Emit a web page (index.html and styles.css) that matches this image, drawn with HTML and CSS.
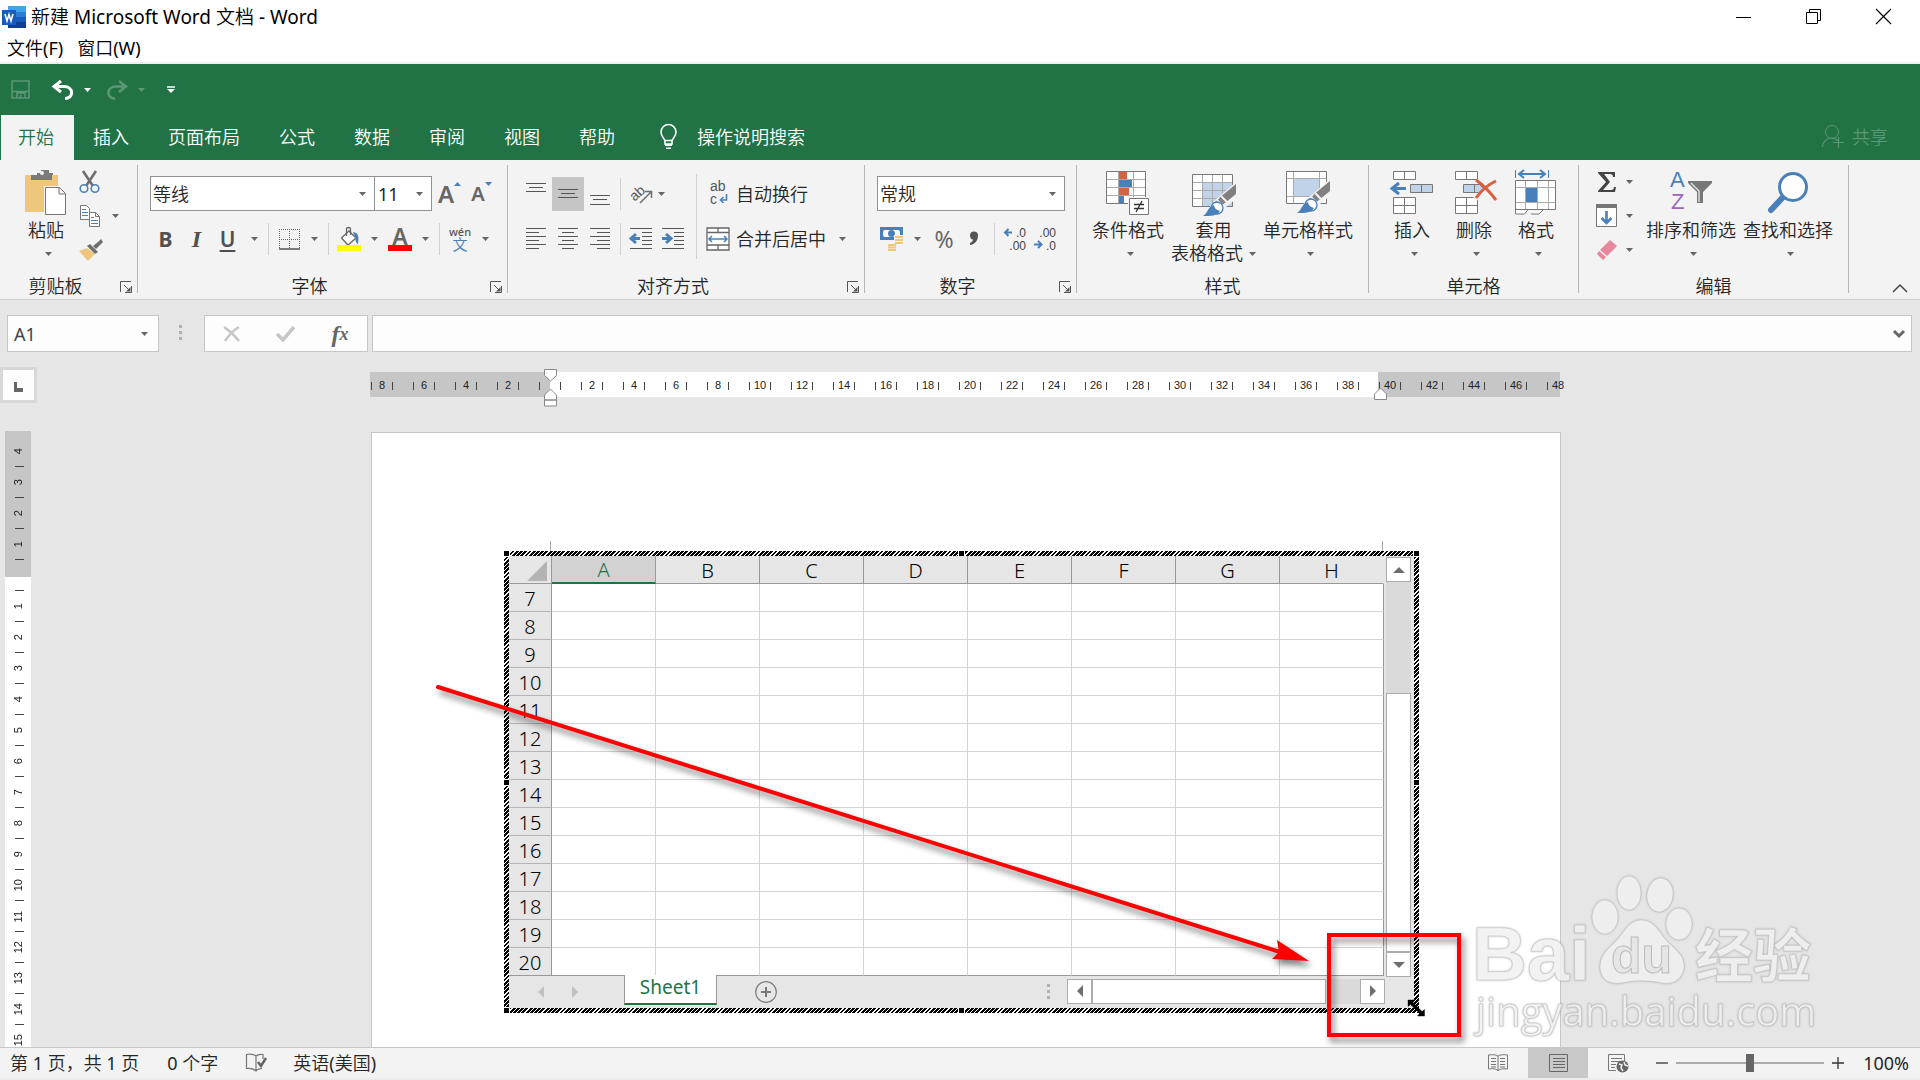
FILE: index.html
```html
<!DOCTYPE html>
<html lang="zh-CN">
<head>
<meta charset="utf-8">
<title>新建 Microsoft Word 文档 - Word</title>
<link rel="stylesheet" href="styles.css">
</head>
<body>
<svg class="defs" width="0" height="0" aria-hidden="true">
  <defs>
    <symbol id="caret" viewBox="0 0 7 4"><path d="M0 0h7L3.500 4z" fill="currentColor"/></symbol>
    <symbol id="launch" viewBox="0 0 12 12"><path d="M.5 11V.5H11M11.500 5v6.500H5M4 4l6 6" fill="none" stroke="#555"/><path d="M10.500 6v4.500H6z" fill="#555"/></symbol>
    <symbol id="brush" viewBox="0 0 34 34"><path d="M33 1v10L22 20l-6-5z" fill="#808080"/><path d="M22 20l-5 4-5-5 5-4z" fill="#808080"/><path d="M18 13l7 7M14 17l7 7" stroke="#f3f3f3" stroke-width="2"/><circle cx="14" cy="25" r="6" fill="#fff" stroke="#4a80ba" stroke-width="1.300"/><path d="M0 33c5-3 5-10 11-11 0 3 2 5 6 6-3 5-9 5-17 5z" fill="#4a80ba"/></symbol>
  </defs>
</svg>

<header class="titlebar">
  <svg class="applogo" viewBox="0 0 24 22"><path d="M6 0h18v6H6z" fill="#41a5ee"/><path d="M6 6h18v5H6z" fill="#2b7cd3"/><path d="M6 11h18v5H6z" fill="#185abd"/><path d="M6 16h18v6H6z" fill="#103f91"/><rect y="4" width="14" height="15" fill="#185abd"/><path d="M3 8l2 7 2-6.500L9 15l2-7" fill="none" stroke="#fff" stroke-width="1.600"/></svg>
  <h1>新建 Microsoft Word 文档 - Word</h1>
  <div class="winbtns">
    <button aria-label="最小化"><svg width="16" height="16"><path d="M0 8.500h15" stroke="#000"/></svg></button>
    <button aria-label="还原"><svg width="16" height="16"><path d="M.5 3.500h11v11H.5zM3.500 3.500v-3h11v11h-3" fill="none" stroke="#000"/></svg></button>
    <button aria-label="关闭"><svg width="16" height="16"><path d="M0 0l15 15M15 0L0 15" stroke="#000" stroke-width="1.200"/></svg></button>
  </div>
</header>
<nav class="menubar"><a href="#file">文件(F)</a><a href="#window">窗口(W)</a></nav>

<section class="greenbar">
  <div class="qat">
    <button class="q-save dim" aria-label="保存"><svg width="19" height="19"><path d="M1 1h17v17H1zM1 11.500h17M6 18v-5h8v5M9.500 15v3" fill="none" stroke="currentColor" stroke-width="1.600"/></svg></button>
    <button class="q-undo" aria-label="撤消"><svg width="22" height="20"><path d="M9 1L2 6.500 9 12M3 6.500h9c10 0 10 12 1 12" fill="none" stroke="#fff" stroke-width="3"/></svg><svg class="caret"><use href="#caret"/></svg></button>
    <button class="q-redo dim" aria-label="恢复"><svg width="22" height="20"><path d="M13 1l7 5.500-7 5.500M19 6.500h-9c-10 0-10 12-1 12" fill="none" stroke="currentColor" stroke-width="2.500"/></svg><svg class="caret"><use href="#caret"/></svg></button>
    <button class="q-more" aria-label="自定义快速访问工具栏"><svg width="8" height="8"><path d="M0 1h8" stroke="#fff" stroke-width="1.500"/><path d="M0 3h8L4 7z" fill="#fff"/></svg></button>
  </div>
  <div class="tabs">
    <button class="active">开始</button><button>插入</button><button>页面布局</button><button>公式</button><button>数据</button><button>审阅</button><button>视图</button><button>帮助</button>
    <button class="tell"><svg width="18" height="26"><path d="M5 20v-3c0-2-4-4-4-9a7.500 7.500 0 0 1 15 0c0 5-4 7-4 9v3zM5 16.500h7" fill="none" stroke="#fff" stroke-width="1.600"/><path d="M5 20h7v2H5zM6 23.500h5V25H6z" fill="#fff"/></svg>操作说明搜索</button>
    <button class="share dim"><svg width="22" height="23"><circle cx="10" cy="7" r="6.500" fill="none" stroke="currentColor"/><path d="M.5 22c0-5 4-9 9-9 3 0 5 1 6 3M16.500 12v11M11 17.500h11" fill="none" stroke="currentColor" stroke-width="1.200"/></svg>共享</button>
  </div>
</section>

<section class="ribbon">
  <div class="group g-clip">
    <div class="body">
      <button class="big"><svg viewBox="0 0 42 46"><rect y="6" width="33" height="37" rx="1" fill="#eec77d"/><path d="M6 6h6V4h4V1h8v3h4v2h-1v5H6z" fill="#7a7a7a"/><circle cx="17" cy="4" r="2" fill="#f3f3f3"/><path d="M19 17h17l6 6v23H19z" fill="#f3f3f3"/><path d="M20.500 18.500h14l6 6v21h-20zM34 18.500v6.500h6.500" fill="#fff" stroke="#777"/></svg><span>粘贴</span><svg class="caret"><use href="#caret"/></svg></button>
      <div class="stack">
        <button aria-label="剪切"><svg width="22" height="22"><path d="M4 0l10 15M17 0L7 15" stroke="#6e6e6e" stroke-width="2.600"/><circle cx="5" cy="17.500" r="3.800" fill="#f3f3f3" stroke="#4a80ba" stroke-width="1.600"/><circle cx="16" cy="17.500" r="3.800" fill="#f3f3f3" stroke="#4a80ba" stroke-width="1.600"/></svg></button>
        <button aria-label="复制"><svg width="22" height="22"><path d="M1.500.5h6l3 3v11h-9zM10.500 7.500h6l4 4v10h-10z" fill="#fff" stroke="#777"/><path d="M3 4.500h4M3 7.500h6M3 10.500h6M12 12.500h3M12 15.500h7M12 18.500h7" stroke="#4a80ba"/><path d="M16.500 7.500v4h4" fill="none" stroke="#777"/></svg><svg class="caret"><use href="#caret"/></svg></button>
        <button aria-label="格式刷"><svg width="24" height="22"><path d="M0 12l8-3 8 6-7 7z" fill="#eec77d"/><path d="M8 7l3-2 8 8-3 2z" fill="#6e6e6e"/><path d="M14 7l5-4 3-3 2 3-3 3-4 4z" fill="#6e6e6e"/></svg></button>
      </div>
    </div>
    <div class="label">剪贴板<button aria-label="剪贴板选项"><svg width="12" height="12"><use href="#launch"/></svg></button></div>
  </div>

  <div class="group g-font">
    <div class="body rows">
      <div class="row">
        <label class="combo c-font"><select aria-label="字体"><option>等线</option></select><svg class="caret"><use href="#caret"/></svg></label>
        <label class="combo c-size"><select aria-label="字号"><option>11</option></select><svg class="caret"><use href="#caret"/></svg></label>
        <button class="grow-a" aria-label="增大字号">A<svg width="7" height="4"><path d="M0 4h7L3.500 0z" fill="#4a80ba"/></svg></button>
        <button class="shrink-a" aria-label="减小字号">A<svg width="7" height="4"><path d="M0 0h7L3.500 4z" fill="#4a80ba"/></svg></button>
      </div>
      <div class="row">
        <button class="ch b" aria-label="加粗">B</button><button class="ch i" aria-label="倾斜">I</button><button class="ch u" aria-label="下划线">U</button>
        <button class="drop" aria-label="下划线选项"><svg class="caret"><use href="#caret"/></svg></button><i class="sep"></i>
        <button class="ic" aria-label="边框"><svg width="21" height="21"><path d="M.5 0v20M0 .5h21M20.500 0v20M10.500 0v20M0 10.500h21" stroke="#666" stroke-dasharray="1 1"/><path d="M0 20h21" stroke="#555" stroke-width="1.500"/></svg></button>
        <button class="drop" aria-label="边框选项"><svg class="caret"><use href="#caret"/></svg></button><i class="sep"></i>
        <button class="ic" aria-label="填充颜色"><svg width="24" height="24"><path d="M4.500 11L12 4l7 7-8 7z" fill="#fff" stroke="#666" stroke-width="1.300"/><path d="M9.500 9V2c0-2 4-2 4 0v6" fill="none" stroke="#666" stroke-width="1.300"/><path d="M16 5c6 1 6 5 5 12-3-1-2-6-5-12z" fill="#4a80ba"/><path d="M0 18h24v6H0z" fill="#ff0"/></svg></button>
        <button class="drop" aria-label="填充颜色选项"><svg class="caret"><use href="#caret"/></svg></button>
        <button class="ic fontcolor" aria-label="字体颜色">A</button>
        <button class="drop" aria-label="字体颜色选项"><svg class="caret"><use href="#caret"/></svg></button><i class="sep"></i>
        <button class="ic pinyin" aria-label="拼音"><span>wén</span><b>文</b></button>
        <button class="drop" aria-label="拼音选项"><svg class="caret"><use href="#caret"/></svg></button>
      </div>
    </div>
    <div class="label">字体<button aria-label="字体选项"><svg width="12" height="12"><use href="#launch"/></svg></button></div>
  </div>

  <div class="group g-align">
    <div class="body cols">
      <div class="rows">
        <div class="row">
          <button class="al" aria-label="顶端对齐"><svg width="20" height="32"><path d="M0 5.500h20M3 9.500h14M0 13.500h20" stroke="#555"/></svg></button>
          <button class="al on" aria-label="垂直居中"><svg width="20" height="32"><path d="M0 11.500h20M3 15.500h14M0 19.500h20" stroke="#555"/></svg></button>
          <button class="al" aria-label="底端对齐"><svg width="20" height="32"><path d="M0 17.500h20M3 21.500h14M0 26.500h20" stroke="#555"/></svg></button>
          <i class="sep"></i>
          <button class="al orient" aria-label="方向"><svg width="24" height="22"><text x="0" y="14" transform="rotate(-42 8 12)" class="abt">ab</text><path d="M9 20L20 9M14 8.500h6.500V15" fill="none" stroke="#6e6e6e" stroke-width="1.500"/></svg><svg class="caret"><use href="#caret"/></svg></button>
        </div>
        <div class="row">
          <button class="al" aria-label="左对齐"><svg width="20" height="22"><path d="M0 .5h20M0 4.500h13M0 8.500h20M0 12.500h13M0 16.500h20M0 20.500h13" stroke="#555"/></svg></button>
          <button class="al" aria-label="居中"><svg width="20" height="22"><path d="M0 .5h20M4 4.500h12M0 8.500h20M4 12.500h12M0 16.500h20M4 20.500h12" stroke="#555"/></svg></button>
          <button class="al" aria-label="右对齐"><svg width="20" height="22"><path d="M0 .5h20M7 4.500h13M0 8.500h20M7 12.500h13M0 16.500h20M7 20.500h13" stroke="#555"/></svg></button>
          <i class="sep"></i>
          <button class="al" aria-label="减少缩进"><svg width="22" height="22"><path d="M0 .5h22M12 4.500h10M12 8.500h10M12 12.500h10M12 16.500h10M0 20.500h22" stroke="#555"/><path d="M10 10.500H2M6 6l-5 4.500L6 15" fill="none" stroke="#4a80ba" stroke-width="3"/></svg></button>
          <button class="al" aria-label="增加缩进"><svg width="22" height="22"><path d="M0 .5h22M12 4.500h10M12 8.500h10M12 12.500h10M12 16.500h10M0 20.500h22" stroke="#555"/><path d="M0 10.500h8M4 6l5 4.500L4 15" fill="none" stroke="#4a80ba" stroke-width="3"/></svg></button>
        </div>
      </div>
      <i class="sep tall"></i>
      <div class="rows">
        <div class="row"><button class="txt"><svg width="24" height="24"><text x="4" y="9" class="abt">ab</text><text x="4" y="22" class="abt">c</text><path d="M20.500 12v6H15M17.500 15l-3 3 3 3" fill="none" stroke="#4a80ba" stroke-width="1.600"/></svg><span>自动换行</span></button></div>
        <div class="row"><button class="txt"><svg width="24" height="24"><path d="M1 1h22v22H1zM1 5.500h22M1 18h22M12 1v4.500M12 18v5" fill="#fff" stroke="#666" stroke-width="1.300"/><path d="M3 12h18M6 9l-3 3 3 3M18 9l3 3-3 3" fill="none" stroke="#4a80ba" stroke-width="1.500"/></svg><span>合并后居中</span></button><button class="drop wide" aria-label="合并选项"><svg class="caret"><use href="#caret"/></svg></button></div>
      </div>
    </div>
    <div class="label">对齐方式<button aria-label="对齐选项"><svg width="12" height="12"><use href="#launch"/></svg></button></div>
  </div>

  <div class="group g-num">
    <div class="body rows">
      <div class="row"><label class="combo c-num"><select aria-label="数字格式"><option>常规</option></select><svg class="caret"><use href="#caret"/></svg></label></div>
      <div class="row">
        <button class="ic" aria-label="会计数字格式"><svg width="24" height="24"><path d="M0 0h23v13H0z" fill="#4a80ba"/><path d="M4 3h15l1 2v3l-1 2H4L3 8V5z" fill="#fff"/><circle cx="11.500" cy="6.500" r="3.500" fill="#4a80ba"/><path d="M14 8h9v10h-9zM7 16h10v8H7z" fill="#f3f3f3"/><path d="M15 10h8M15 13h8M15 16h8M8 18h8M8 20.500h8M8 23h8" stroke="#eec77d" stroke-width="2"/></svg></button>
        <button class="drop" aria-label="会计选项"><svg class="caret"><use href="#caret"/></svg></button>
        <button class="ic pct" aria-label="百分比">%</button>
        <button class="ic" aria-label="千位分隔"><svg width="10" height="16"><path d="M1 4.500a4 4 0 0 1 8 0c0 5-3 9-8 9.500v-2c2-1 3-2 3-3.500-2 0-3-2-3-4z" fill="#555"/></svg></button>
        <i class="sep"></i>
        <button class="ic dec" aria-label="增加小数位"><svg width="24" height="26"><text x="23" y="11" text-anchor="end">.0</text><text x="23" y="24" text-anchor="end">.00</text><path d="M9 6.500H2M5.500 3L2 6.500 5.500 10" fill="none" stroke="#4a80ba" stroke-width="2"/></svg></button>
        <button class="ic dec" aria-label="减少小数位"><svg width="24" height="26"><text x="23" y="11" text-anchor="end">.00</text><text x="23" y="24" text-anchor="end">.0</text><path d="M1 18.500h7M5 15l3.500 3.500L5 22" fill="none" stroke="#4a80ba" stroke-width="2"/></svg></button>
      </div>
    </div>
    <div class="label">数字<button aria-label="数字选项"><svg width="12" height="12"><use href="#launch"/></svg></button></div>
  </div>

  <div class="group g-style">
    <div class="body">
      <button class="big"><svg viewBox="0 0 44 46"><path d="M.5 2.500h39v32H.5z" fill="#fff" stroke="#777"/><path d="M1 10.500h38M1 18.500h38M1 26.500h38M12.500 3v31M27.500 3v31" stroke="#aaa"/><path d="M13 3h8v7h-8zM13 19h10v7H13z" fill="#d95f41"/><path d="M13 11h13v7H13zM13 27h5v7h-5z" fill="#4a80ba"/><path d="M22 28h22v18H22z" fill="#f3f3f3"/><path d="M23.500 29.500h19v16h-19z" fill="#fff" stroke="#777"/><path d="M28 35.500h10M28 39.500h10M36 32l-6 11" stroke="#333" stroke-width="1.300"/></svg><span>条件格式</span><svg class="caret"><use href="#caret"/></svg></button>
      <button class="big"><svg viewBox="0 0 44 46"><path d="M.5 5.500h40v32H.5z" fill="#fff" stroke="#777"/><path d="M11 14h29v23H11z" fill="#c0d3e9"/><path d="M1 13.500h39M1 21.500h39M1 29.500h39M10.500 6v31M20.500 6v31M30.500 6v31" stroke="#aaa"/><path d="M44 13L22 32l-10 14h12L44 30z" fill="#f3f3f3"/><use href="#brush" x="11" y="14" width="34" height="34"/></svg><span>套用</span><span class="inl">表格格式<svg class="caret"><use href="#caret"/></svg></span></button>
      <button class="big"><svg viewBox="0 0 44 46"><path d="M.5 2.500h40v32H.5z" fill="#fff" stroke="#777"/><path d="M8 10h25v17H8z" fill="#c0d3e9"/><path d="M1 9.500h39M1 27.500h39M7.500 3v31M33.500 3v31" stroke="#aaa"/><path d="M44 10L22 29 12 43h12L44 27z" fill="#f3f3f3"/><use href="#brush" x="11" y="11" width="34" height="34"/></svg><span>单元格样式</span><svg class="caret"><use href="#caret"/></svg></button>
    </div>
    <div class="label">样式</div>
  </div>

  <div class="group g-cells">
    <div class="body">
      <button class="big"><svg viewBox="0 0 44 46"><path d="M3.500 2.500h22v8h-22zM14.500 2.500v8M3.500 28.500h22v16h-22zM14.500 28.500v16M3.500 36.500h22" fill="#fff" stroke="#777"/><path d="M20.500 15.500h22v8h-22zM31.500 15.500v8" fill="#c0d3e9" stroke="#777"/><path d="M16 19.500H3M9 14l-7 5.500L9 25" fill="none" stroke="#4a80ba" stroke-width="3"/></svg><span>插入</span><svg class="caret"><use href="#caret"/></svg></button>
      <button class="big"><svg viewBox="0 0 44 46"><path d="M3.500 2.500h22v8h-22zM14.500 2.500v8M3.500 28.500h22v16h-22zM14.500 28.500v16M3.500 36.500h22" fill="#fff" stroke="#777"/><path d="M11.500 15.500h16l4 4-4 4h-16zM22.500 15.500v8" fill="#c0d3e9" stroke="#777"/><path d="M23 30L45 10" stroke="#f3f3f3" stroke-width="5"/><path d="M24 11c7 5 14 12 20 20M24 29c5-7 11-13 20-17" fill="none" stroke="#d95f41" stroke-width="3"/></svg><span>删除</span><svg class="caret"><use href="#caret"/></svg></button>
      <button class="big"><svg viewBox="0 0 44 46"><path d="M1.500 11.500h40v29h-40zM1.500 40v5h9l4-5M17 45h8l5-5" fill="#fff" stroke="#777"/><path d="M11.500 12v28M23.500 12v28M34.500 12v28M2 18.500h39M2 33.500h39" stroke="#aaa"/><path d="M12 19h11v14H12z" fill="#4a80ba"/><path d="M1.500 1v8M34.500 1v8" stroke="#4a80ba"/><path d="M6 5h24M10 1L5 5l5 4M26 1l5 4-5 4" fill="none" stroke="#4a80ba" stroke-width="2"/></svg><span>格式</span><svg class="caret"><use href="#caret"/></svg></button>
    </div>
    <div class="label">单元格</div>
  </div>

  <div class="group g-edit">
    <div class="body">
      <div class="stack">
        <button aria-label="自动求和"><svg width="22" height="22"><path d="M2 1h17v5h-2c0-2-1-3-3-3H8l6 8-7 8h8c2 0 3-1 3-3h2l-1 5H2v-1l8-9-8-9z" fill="#444"/></svg><svg class="caret"><use href="#caret"/></svg></button>
        <button aria-label="填充"><svg width="22" height="24"><path d="M.5 1.500h20v21H.5z" fill="#fff" stroke="#777"/><path d="M0 0h21v4H0z" fill="#777"/><path d="M10.500 7v11M5.500 14l5 5 5-5" fill="none" stroke="#4a80ba" stroke-width="2.600"/></svg><svg class="caret"><use href="#caret"/></svg></button>
        <button aria-label="清除"><svg width="22" height="22"><path d="M14 1l7 6-10 10-7-6zM3 12l7 6-3 3-6-6z" fill="#e8879b"/></svg><svg class="caret"><use href="#caret"/></svg></button>
      </div>
      <button class="big"><svg viewBox="0 0 44 46"><text x="1" y="18" class="az a">A</text><text x="2" y="40" class="az z">Z</text><path d="M19 12h24v2l-9 9v11h-6V23l-9-9z" fill="#777"/><path d="M22 14l8 8v11" fill="none" stroke="#ddd" stroke-width="1.500"/></svg><span>排序和筛选</span><svg class="caret"><use href="#caret"/></svg></button>
      <button class="big"><svg viewBox="0 0 44 46"><path d="M5 41L19 26" stroke="#4a80ba" stroke-width="6" stroke-linecap="round"/><circle cx="27" cy="18" r="13.500" fill="#fff" stroke="#4a80ba" stroke-width="3"/></svg><span>查找和选择</span><svg class="caret"><use href="#caret"/></svg></button>
    </div>
    <div class="label">编辑</div>
  </div>
  <button class="collapse" aria-label="折叠功能区"><svg width="16" height="10"><path d="M1 9l7-7 7 7" fill="none" stroke="#444" stroke-width="1.500"/></svg></button>
</section>

<section class="formulabar">
  <label class="namebox"><input aria-label="名称框" value="A1"><svg class="caret"><use href="#caret"/></svg></label>
  <svg class="dots" width="3" height="16"><path d="M0 0h3v3H0zM0 6h3v3H0zM0 12h3v3H0z" fill="#b0b0b0"/></svg>
  <div class="fxbox">
    <button aria-label="取消"><svg width="18" height="16"><path d="M1 1c6 4 11 9 15 14M16 1C11 4 6 9 2 15" fill="none" stroke="#c6c6c6" stroke-width="2.500"/></svg></button>
    <button aria-label="输入"><svg width="20" height="16"><path d="M1 8l6 6L18 1" fill="none" stroke="#c6c6c6" stroke-width="3.500"/></svg></button>
    <button class="fx" aria-label="插入函数">f<small>x</small></button>
  </div>
  <label class="formula"><input aria-label="编辑栏" value=""><svg width="12" height="8"><path d="M1 1l5 5 5-5" fill="none" stroke="#666" stroke-width="3"/></svg></label>
</section>

<main class="workspace">
  <div class="leftrail">
    <button class="tabsel" aria-label="制表符"><svg width="10" height="10"><path d="M0 0h3v6h6v4H0z" fill="#666"/></svg></button>
    <ol class="vruler"><li><span>4</span></li><li><span>3</span></li><li><span>2</span></li><li><span>1</span></li><li></li><li><span>1</span></li><li><span>2</span></li><li><span>3</span></li><li><span>4</span></li><li><span>5</span></li><li><span>6</span></li><li><span>7</span></li><li><span>8</span></li><li><span>9</span></li><li><span>10</span></li><li><span>11</span></li><li><span>12</span></li><li><span>13</span></li><li><span>14</span></li><li><span>15</span></li></ol>
  </div>
  <div class="canvas">
    <div class="hruler">
      <ol><li>8</li><li>6</li><li>4</li><li>2</li><li></li><li>2</li><li>4</li><li>6</li><li>8</li><li>10</li><li>12</li><li>14</li><li>16</li><li>18</li><li>20</li><li>22</li><li>24</li><li>26</li><li>28</li><li>30</li><li>32</li><li>34</li><li>36</li><li>38</li><li>40</li><li>42</li><li>44</li><li>46</li><li>48</li></ol>
      <svg class="mark first" width="13" height="38"><path d="M.5.500h12v6l-6 5.500-6-5.500zM.5 31V26l6-6 6 6v5zM.5 31h12v6H.5z" fill="#fff" stroke="#888"/></svg>
      <svg class="mark last" width="13" height="13"><path d="M.5 12.500V7l6-6 6 6v5.500z" fill="#fff" stroke="#888"/></svg>
    </div>
    <article class="page">
      <i class="crop left"></i><i class="crop right"></i>
      <div class="object">
        <i class="h tl"></i><i class="h tc"></i><i class="h tr"></i><i class="h ml"></i><i class="h mr"></i><i class="h bl"></i><i class="h bc"></i>
        <div class="sheet">
          <table>
            <thead><tr><th class="corner"><svg width="21" height="20"><path d="M20 0v20H0z" fill="#b4b4b4"/></svg></th><th class="sel">A</th><th>B</th><th>C</th><th>D</th><th>E</th><th>F</th><th>G</th><th>H</th></tr></thead>
            <tbody>
              <tr><th>7</th><td></td><td></td><td></td><td></td><td></td><td></td><td></td><td></td></tr>
              <tr><th>8</th><td></td><td></td><td></td><td></td><td></td><td></td><td></td><td></td></tr>
              <tr><th>9</th><td></td><td></td><td></td><td></td><td></td><td></td><td></td><td></td></tr>
              <tr><th>10</th><td></td><td></td><td></td><td></td><td></td><td></td><td></td><td></td></tr>
              <tr><th>11</th><td></td><td></td><td></td><td></td><td></td><td></td><td></td><td></td></tr>
              <tr><th>12</th><td></td><td></td><td></td><td></td><td></td><td></td><td></td><td></td></tr>
              <tr><th>13</th><td></td><td></td><td></td><td></td><td></td><td></td><td></td><td></td></tr>
              <tr><th>14</th><td></td><td></td><td></td><td></td><td></td><td></td><td></td><td></td></tr>
              <tr><th>15</th><td></td><td></td><td></td><td></td><td></td><td></td><td></td><td></td></tr>
              <tr><th>16</th><td></td><td></td><td></td><td></td><td></td><td></td><td></td><td></td></tr>
              <tr><th>17</th><td></td><td></td><td></td><td></td><td></td><td></td><td></td><td></td></tr>
              <tr><th>18</th><td></td><td></td><td></td><td></td><td></td><td></td><td></td><td></td></tr>
              <tr><th>19</th><td></td><td></td><td></td><td></td><td></td><td></td><td></td><td></td></tr>
              <tr><th>20</th><td></td><td></td><td></td><td></td><td></td><td></td><td></td><td></td></tr>
            </tbody>
          </table>
          <div class="vscroll">
            <button aria-label="向上"><svg width="12" height="6"><path d="M0 6h12L6 0z" fill="#6e6e6e"/></svg></button>
            <div class="track"></div><div class="thumb"></div>
            <button aria-label="向下"><svg width="12" height="6"><path d="M0 0h12L6 6z" fill="#6e6e6e"/></svg></button>
          </div>
          <div class="sheetbar">
            <button class="nav" aria-label="上一张"><svg width="6" height="12"><path d="M6 0v12L0 6z" fill="#c0c0c0"/></svg></button>
            <button class="nav" aria-label="下一张"><svg width="6" height="12"><path d="M0 0v12l6-6z" fill="#c0c0c0"/></svg></button>
            <button class="sheettab">Sheet1</button>
            <button class="add" aria-label="新工作表"><svg width="22" height="22"><circle cx="11" cy="11" r="10.300" fill="none" stroke="#808080" stroke-width="1.200"/><path d="M11 6v10M6 11h10" stroke="#777" stroke-width="2"/></svg></button>
            <svg class="dots" width="3" height="16"><path d="M0 0h3v3H0zM0 6h3v3H0zM0 12h3v3H0z" fill="#b0b0b0"/></svg>
            <div class="hscroll">
              <button aria-label="向左"><svg width="6" height="12"><path d="M6 0v12L0 6z" fill="#6e6e6e"/></svg></button>
              <div class="thumb"></div><div class="track"></div>
              <button aria-label="向右"><svg width="6" height="12"><path d="M0 0v12l6-6z" fill="#6e6e6e"/></svg></button>
            </div>
          </div>
        </div>
      </div>
      <svg class="annot" viewBox="0 0 1190 615" width="1190" height="615">
        <g class="shadow" fill="none" stroke="#f00">
          <path d="M66 254L908 519" stroke-width="4" stroke-linecap="round"/>
          <path d="M937 528L900 526l7-7-2-12z" fill="#f00" stroke="none"/>
          <rect x="957" y="502" width="130" height="100" stroke-width="4"/>
        </g>
        <path d="M1036 567h7l-2 2.500 9 9 2.500-2v6.500h-7l2-2.500-9-9-2.500 2z" fill="#000" stroke="#000" stroke-width=".4"/>
      </svg>
    </article>
  </div>
  <svg class="watermark" viewBox="0 0 370 180" width="370" height="180" aria-label="Baidu 经验 jingyan.baidu.com">
    <g class="wm">
      <text x="12" y="121" class="wm-bai">Bai</text>
      <ellipse cx="145" cy="58" rx="13" ry="17"/><ellipse cx="169" cy="34" rx="12" ry="17"/><ellipse cx="200" cy="36" rx="13" ry="17" transform="rotate(8 200 36)"/><ellipse cx="219" cy="65" rx="13" ry="16"/>
      <path d="M181 61c15 0 18 14 29 24 9 8 15 14 14 24-2 12-11 17-22 15-14-3-27-3-40 0-13 2-22-4-22-16 0-11 6-16 14-24 10-9 14-23 27-23z"/>
      <text x="151" y="114" class="wm-du">du</text>
      <text x="235" y="118" class="wm-cn">经验</text>
      <text x="16" y="167" class="wm-url">jingyan.baidu.com</text>
    </g>
  </svg>
</main>

<footer class="status">
  <span class="st-page">第 1 页，共 1 页</span><span class="st-words">0 个字</span>
  <button class="st-proof" aria-label="校对"><svg width="21" height="20"><path d="M10 3C8 1 4 1 .5 1.500v14C4 15 8 16 10 18c1-2 3-2 6-2.500M10 3v15M10 3c2-2 4-2 7-1.500V6" fill="none" stroke="#777" stroke-width="1.200"/><path d="M12 9l3 4 5-8" fill="none" stroke="#666" stroke-width="2.500"/></svg></button>
  <span class="st-lang">英语(美国)</span>
  <div class="views">
    <button aria-label="阅读视图"><svg width="20" height="18"><path d="M10 2C8 .5 4 .5.5 1v14c4-.5 7-.5 9.500 1.500 3-2 6-2 9.500-1.500V1C16 .5 12 .5 10 2zv15" fill="none" stroke="#777"/><path d="M3 4.500h5M3 7.500h5M3 10.500h5M12 4.500h5M12 7.500h5M12 10.500h5M3 13h5M12 13h5" stroke="#777"/></svg></button>
    <button class="on" aria-label="页面视图"><svg width="19" height="18"><path d="M.5.500h18v17H.500z M4 4.500h12M4 7.500h12M4 10.500h12M4 13.500h12" fill="none" stroke="#666"/></svg></button>
    <button aria-label="Web 版式视图"><svg width="21" height="19"><path d="M8 16.500H.5V.5h16V8M3 4.500h11M3 7.500h10M3 10.500h5M3 13.500h4" fill="none" stroke="#777"/><circle cx="14.500" cy="12.500" r="6" fill="#666"/><path d="M11 10l3 1-1 3 2 3M16 8l1 3 3 1" fill="none" stroke="#f3f3f3" stroke-width="1.500"/></svg></button>
  </div>
  <div class="zoom">
    <button aria-label="缩小"><svg width="12" height="12"><path d="M0 6h12" stroke="#333" stroke-width="1.300"/></svg></button>
    <input type="range" min="0" max="100" value="50" aria-label="缩放">
    <button aria-label="放大"><svg width="12" height="12"><path d="M0 6h12M6 0v12" stroke="#333" stroke-width="1.300"/></svg></button>
    <output>100%</output>
  </div>
</footer>
</body>
</html>
```

FILE: styles.css
```css
* { box-sizing: border-box; }
html, body { height: 100%; }
body {
  margin: 0;
  display: flex;
  flex-direction: column;
  overflow: hidden;
  background: #e6e6e6;
  color: #262626;
  font: 400 18px/24px "Noto Sans", "Noto Sans CJK SC DemiLight", "Noto Sans CJK SC", sans-serif;
}
button, input, select { font: inherit; color: inherit; margin: 0; padding: 0; border: 0; background: none; }
button { display: flex; align-items: center; justify-content: center; white-space: nowrap; }
ol { list-style: none; margin: 0; padding: 0; }
svg { display: block; flex: none; overflow: visible; }
.defs { position: absolute; }
.caret { width: 7px; height: 4px; color: #666; }

/* title and menu */
.titlebar { display: flex; align-items: center; height: 34px; padding-left: 2px; background: #fff; color: #000; flex: none; }
.applogo { width: 24px; height: 22px; }
h1 { margin: 0 0 0 5px; font: inherit; font-size: 19px; }
.winbtns { display: flex; margin-left: auto; padding-right: 1px; }
.winbtns button { width: 70px; height: 32px; }
.menubar { display: flex; gap: 14px; height: 30px; padding-left: 7px; background: #fff; border-bottom: 2px solid #f0f0f0; flex: none; }
.menubar a { color: #000; text-decoration: none; line-height: 28px; }

/* green bar */
.greenbar { background: #217346; color: #fff; flex: none; }
.qat { display: flex; align-items: center; height: 51px; padding-left: 11px; }
.qat button { gap: 10px; }
.qat .caret { color: #fff; }
.dim, .qat .dim .caret { color: #5b9676; }
.q-undo { margin-left: 22px; }
.q-redo { margin-left: 15px; }
.q-more { margin-left: 22px; }
.tabs { display: flex; height: 45px; padding-left: 1px; }
.tabs button { padding: 0 20px 2px 19px; }
.tabs .active { background: #f3f3f3; color: #217346; padding: 0 20px 2px 17px; }
.tabs .tell { gap: 19px; padding-left: 25px; }
.tabs .share { margin-left: auto; gap: 8px; padding-right: 32px; }

/* ribbon */
.ribbon { display: flex; height: 140px; padding: 5px 0 6px; background: #f3f3f3; border-bottom: 1px solid #d0d0d0; flex: none; }
.group { display: flex; flex-direction: column; border-right: 1px solid #b5b5b5; flex: none; }
.body { display: flex; flex: 1; }
.label { position: relative; height: 14px; line-height: 14px; text-align: center; }
.label:has(button) { padding-right: 26px; }
.label button { position: absolute; right: 5px; bottom: 0; }
.g-clip { width: 138px; }
.g-font { width: 370px; }
.g-align { width: 357px; }
.g-num { width: 212px; }
.g-style { width: 292px; }
.g-cells { width: 210px; }
.g-edit { width: 270px; }
.g-clip .body { padding-left: 24px; gap: 11px; }
.g-style .body { padding-left: 15px; gap: 7px; }
.g-cells .body { padding-left: 21px; gap: 18px; }
.g-edit .body { padding-left: 17px; gap: 7px; }

.big { flex-direction: column; justify-content: flex-start; padding-top: 4px; line-height: 23px; min-width: 44px; }
.big > svg:first-child { width: 44px; height: 46px; margin-bottom: 4px; }
.big > .caret { margin: 10px 0 0 4px; }
.inl { display: flex; align-items: center; gap: 6px; }
.stack { display: flex; flex-direction: column; gap: 11px; padding-top: 5px; }
.stack button { height: 23px; justify-content: flex-start; gap: 11px; }
.g-edit .stack { width: 43px; }
.g-edit .stack button { gap: 8px; }

.rows { display: flex; flex-direction: column; gap: 12px; padding-top: 11px; }
.row { display: flex; align-items: center; height: 35px; }
.row + .row { height: 32px; }
.g-font .body, .g-align .body { padding-left: 12px; }
.g-num .body { padding-left: 12px; }

.combo { position: relative; display: block; height: 35px; border: 1px solid #919191; background: #fff; }
.combo select { width: 100%; height: 100%; padding-left: 2px; appearance: none; }
.combo .caret { position: absolute; right: 8px; top: 15px; }
.c-font { width: 225px; }
.c-size { width: 58px; margin-left: -1px; }
.c-size select { padding-left: 3px; }
.c-num { width: 188px; }

.grow-a, .shrink-a { align-items: flex-start; color: #666; font-weight: 600; line-height: 24px; }
.grow-a { margin-left: 6px; font-size: 24px; }
.shrink-a { margin-left: 10px; font-size: 20px; }
.ch { width: 31px; height: 32px; font-size: 21px; font-weight: 700; color: #505050; }
.ch.i { font-family: "Liberation Serif", serif; font-style: italic; font-size: 24px; }
.ch.u { font-weight: 600; text-decoration: underline; text-decoration-thickness: 2px; text-underline-offset: 3px; }
.drop { width: 17px; height: 32px; margin: 0 0 0 2px; }
.drop.wide { margin-left: 8px; }
.drop + .ic { margin-left: 2px; }
.sep { width: 1px; height: 32px; margin: 0 5px; background: #cfcfcf; flex: none; }
.ch + .drop { margin-left: 3px; }
.ic { width: 30px; height: 32px; }
.fontcolor { position: relative; height: 24px; font-size: 23px; line-height: 18px; font-weight: 600; color: #666; align-items: flex-start; }
.fontcolor::after { content: ""; position: absolute; left: 3px; bottom: 0; width: 24px; height: 6px; background: #f00; }
.pinyin { flex-direction: column; font-size: 11px; line-height: 11px; color: #555; font-weight: 500; }
.pinyin b { font-size: 15px; line-height: 15px; font-weight: 500; color: #4a80ba; }
.al { width: 32px; height: 34px; }
.al.on { background: #c5c5c5; }
.al + .sep { margin: 0 4px; }
.orient { width: auto; gap: 3px; padding-left: 6px; }
.sep.tall { height: 85px; margin: 9px 9px 0 7px; }
.txt { gap: 6px; }
.abt { font: 14px "Liberation Sans", sans-serif; fill: #555; }
.pct { font-size: 23px; color: #666; }
.drop + .pct { margin-left: 3px; }
.dec text { font: 12px "Liberation Sans", sans-serif; fill: #444; }
.az { font: 22px "Liberation Sans", sans-serif; }
.a { fill: #4a80ba; }
.z { fill: #9b66bc; }
.collapse { margin: auto 12px 0 auto; }

/* formula bar */
.formulabar { display: flex; height: 60px; padding: 15px 8px 8px 7px; flex: none; }
.namebox, .fxbox, .formula { display: flex; align-items: center; border: 1px solid #c6c6c6; background: #fdfdfd; }
.namebox { width: 152px; padding: 0 10px 0 6px; color: #444; }
.namebox input { flex: 1; min-width: 0; }
.formulabar .dots { margin: 10px 22px 0 20px; }
.fxbox { width: 164px; }
.fxbox button { flex: 1; }
.fx { font: italic 700 24px/24px "Liberation Serif", serif; color: #666; }
.fx small { font-size: 18px; }
.formula { flex: 1; margin-left: 4px; padding: 0 6px; }
.formula input { flex: 1; }

/* workspace */
.workspace { position: relative; display: flex; flex: 1; min-height: 0; overflow: hidden; }
.leftrail { display: flex; flex-direction: column; width: 37px; padding-top: 7px; }
.tabsel { width: 37px; height: 36px; border: 3px solid #d8d8d8; background: #fdfdfd; flex: none; padding-top: 4px; }
.vruler { flex: 1; width: 26px; margin: 28px 0 0 5px; padding-top: 5px; overflow: hidden; background: linear-gradient(#c6c6c6 146px, #fff 146px); }
.vruler li { display: flex; align-items: center; justify-content: center; height: 31px; background: linear-gradient(#444, #444) 10px 100% / 9px 1px no-repeat; font: 11px/16px "Liberation Sans", sans-serif; color: #222; }
.vruler span { writing-mode: vertical-rl; transform: rotate(180deg); }
.canvas { display: flex; flex-direction: column; align-items: center; flex: 1; padding: 12px 25px 0 0; min-width: 1216px; }
.hruler { position: relative; width: 1192px; height: 25px; background: linear-gradient(90deg, #c6c6c6 180px, #fff 180px, #fff 1008px, #c6c6c6 1008px, #c6c6c6 1190px, transparent 1190px); flex: none; }
.hruler ol { display: flex; }
.hruler li { flex: none; width: 42px; padding-right: 18px; height: 25px; text-align: center; font: 11px/27px "Liberation Sans", sans-serif; color: #222;
  background: linear-gradient(#444, #444) 1px 10px / 1px 8px no-repeat, linear-gradient(#444, #444) 22px 10px / 1px 8px no-repeat; }
.hruler li:last-child { background-size: 1px 8px, 0 0; }
.mark { position: absolute; }
.mark.first { left: 174px; top: -3px; }
.mark.last { left: 1004px; top: 15px; }
.page { position: relative; flex: 1; width: 1190px; margin-top: 35px; padding: 118px 0 0 132px; border: 1px solid #c6c6c6; border-bottom: 0; background: #fff; }
.crop { position: absolute; top: 108px; width: 1px; height: 11px; background: #a8a8a8; }
.crop.left { left: 178px; }
.crop.right { left: 1010px; }
.object { position: relative; width: 915px; padding: 5px; background: repeating-linear-gradient(-45deg, #000 0 2px, #fff 2px 3px); }
.h { position: absolute; width: 5px; height: 5px; background: #000; outline: 1px solid #fff; }
.tl, .ml, .bl { left: 0; }
.tr, .mr { right: 0; }
.tl, .tc, .tr { top: 0; }
.bl, .bc { bottom: 0; }
.tc, .bc { left: 455px; }
.ml, .mr { top: 229px; }
.sheet { position: relative; display: grid; grid-template-columns: 875px 30px; grid-template-rows: 420px 32px; background: #e6e6e6; }
table { border-collapse: separate; border-spacing: 0; table-layout: fixed; width: 875px; }
th, td { height: 28px; padding: 0; border: 0 solid #d4d4d4; border-width: 0 1px 1px 0; }
th { padding: 3px 0 0; font: 300 20px/24px "Noto Sans", sans-serif; color: #000; background: #e6e6e6; border-color: #999; }
td { background: #fff; width: 104px; }
tbody th { border-bottom-color: #b5b5b5; }
td:last-child { border-right-color: #999; }
tbody tr:last-child > * { border-bottom-color: #999; }
thead th:last-child { border-right-color: #e6e6e6; }
.corner { width: 43px; }
.corner svg { margin-left: 18px; }
.sel { padding-top: 2px; background: #d2d2d2; color: #217346; border-bottom: 2px solid #217346; }
.vscroll { display: flex; flex-direction: column; width: 25px; height: 420px; margin: 1px 0 0 2px; }
.vscroll button, .hscroll button, .thumb { width: 25px; height: 25px; border: 1px solid #ababab; background: #fff; flex: none; }
.track { background: #dadada; }
.vscroll .track { height: 111px; }
.vscroll .thumb { flex: 1; height: auto; }
.sheetbar { grid-column: 1 / 3; display: flex; align-items: center; padding-right: 29px; }
.nav { width: 6px; margin-left: 29px; }
.nav + .nav { margin-left: 28px; }
.sheettab { align-self: flex-start; height: 30px; width: 93px; margin: -1px 0 0 46px; background: #fff; border: 1px solid #999; border-width: 0 1px 2px; border-bottom-color: #217346; color: #217346; padding-bottom: 4px; font-size: 19px; }
.add { margin-left: 38px; }
.sheetbar .dots { margin-left: auto; }
.hscroll { display: flex; width: 318px; margin: 0 0 2px 17px; }
.hscroll .thumb { width: 234px; }
.hscroll .track { flex: 1; }
.annot { position: absolute; left: 0; top: 0; pointer-events: none; }
.shadow { filter: drop-shadow(3px 5px 3px rgba(0, 0, 0, .5)); }
.watermark { position: absolute; right: 90px; bottom: 8px; }
.wm { fill: rgba(255, 255, 255, .75); stroke: rgba(180, 180, 180, .5); stroke-width: 1px; filter: drop-shadow(0 0 1px rgba(120, 120, 120, .5)); }
.wm-bai { font: 700 76px "Liberation Sans", sans-serif; }
.wm-du { font: 700 50px "Liberation Sans", sans-serif; fill: #e6e6e6; stroke: #bbb; }
.wm-cn { font: 700 58px "Noto Sans CJK SC", sans-serif; }
.wm-url { font: 400 40px "Open Sans", sans-serif; }

/* status bar */
.status { display: flex; align-items: center; height: 33px; padding-left: 10px; border-top: 1px solid #c6c6c6; border-bottom: 2px solid #ececec; background: #f3f3f3; flex: none; }
.st-words { margin-left: 28px; }
.st-proof { margin-left: 28px; }
.st-lang { margin-left: 26px; }
.views { display: flex; align-self: stretch; margin-left: auto; }
.views button { width: 60px; }
.views .on { background: #c8c8c8; }
.zoom { display: flex; align-items: center; padding-right: 11px; }
.zoom button { margin-left: 8px; }
.zoom input { appearance: none; width: 148px; height: 18px; margin-left: 8px; background: linear-gradient(#ababab, #ababab) 0 50% / 100% 2px no-repeat; }
.zoom input::-webkit-slider-thumb { appearance: none; width: 8px; height: 18px; background: #666; }
.zoom output { margin-left: 19px; }
```
